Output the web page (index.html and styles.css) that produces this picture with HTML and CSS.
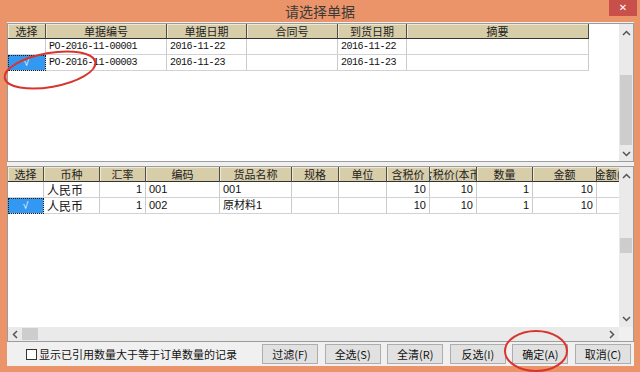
FILE: index.html
```html
<!DOCTYPE html>
<html lang="zh-CN">
<head>
    <meta charset="UTF-8">
    <meta name="viewport" content="width=device-width, initial-scale=1.0">
    <title>请选择单据</title>
    <link rel="stylesheet" href="styles.css">
</head>
<body>

    <div class="window">
        <div class="titlebar">
            <span class="title">请选择单据</span>
            <span class="close">✕</span>
        </div>

        <div class="client">
            <!-- 订单列表 -->
            <div class="grid grid-top">
                <div class="grid-main">
                    <div class="viewport">
                        <div class="row head">
                            <div class="cell">选择</div>
                            <div class="cell">单据编号</div>
                            <div class="cell">单据日期</div>
                            <div class="cell">合同号</div>
                            <div class="cell">到货日期</div>
                            <div class="cell">摘要</div>
                        </div>
                        <div class="row">
                            <div class="cell"></div>
                            <div class="cell code">PO-2016-11-00001</div>
                            <div class="cell code">2016-11-22</div>
                            <div class="cell"></div>
                            <div class="cell code">2016-11-22</div>
                            <div class="cell"></div>
                        </div>
                        <div class="row">
                            <div class="cell pick">√</div>
                            <div class="cell code">PO-2016-11-00003</div>
                            <div class="cell code">2016-11-23</div>
                            <div class="cell"></div>
                            <div class="cell code">2016-11-23</div>
                            <div class="cell"></div>
                        </div>
                    </div>
                    <div class="vscroll">
                        <div class="arrow"><svg width="9" height="6" viewBox="0 0 9 6"><polyline points="1,5 4.5,1.5 8,5" /></svg></div>
                        <div class="track"><div class="thumb thumb-top"></div></div>
                        <div class="arrow"><svg width="9" height="6" viewBox="0 0 9 6"><polyline points="1,1 4.5,4.5 8,1" /></svg></div>
                    </div>
                </div>
            </div>

            <!-- 明细 -->
            <div class="grid grid-bottom">
                <div class="grid-main">
                    <div class="viewport">
                        <div class="row head">
                            <div class="cell">选择</div>
                            <div class="cell">币种</div>
                            <div class="cell">汇率</div>
                            <div class="cell">编码</div>
                            <div class="cell">货品名称</div>
                            <div class="cell">规格</div>
                            <div class="cell">单位</div>
                            <div class="cell">含税价</div>
                            <div class="cell">含税价(本币)</div>
                            <div class="cell">数量</div>
                            <div class="cell">金额</div>
                            <div class="cell">金额(本币)</div>
                        </div>
                        <div class="row">
                            <div class="cell"></div>
                            <div class="cell big">人民币</div>
                            <div class="cell num">1</div>
                            <div class="cell">001</div>
                            <div class="cell">001</div>
                            <div class="cell"></div>
                            <div class="cell"></div>
                            <div class="cell num">10</div>
                            <div class="cell num">10</div>
                            <div class="cell num">1</div>
                            <div class="cell num">10</div>
                            <div class="cell"></div>
                        </div>
                        <div class="row">
                            <div class="cell pick">√</div>
                            <div class="cell big">人民币</div>
                            <div class="cell num">1</div>
                            <div class="cell">002</div>
                            <div class="cell">原材料1</div>
                            <div class="cell"></div>
                            <div class="cell"></div>
                            <div class="cell num">10</div>
                            <div class="cell num">10</div>
                            <div class="cell num">1</div>
                            <div class="cell num">10</div>
                            <div class="cell"></div>
                        </div>
                    </div>
                    <div class="vscroll">
                        <div class="arrow"><svg width="9" height="6" viewBox="0 0 9 6"><polyline points="1,5 4.5,1.5 8,5" /></svg></div>
                        <div class="track"><div class="thumb thumb-bottom"></div></div>
                        <div class="arrow"><svg width="9" height="6" viewBox="0 0 9 6"><polyline points="1,1 4.5,4.5 8,1" /></svg></div>
                    </div>
                </div>
                <div class="hbar">
                    <div class="hscroll">
                        <div class="harrow"><svg width="6" height="9" viewBox="0 0 6 9"><polyline points="5,1 1.5,4.5 5,8" /></svg></div>
                        <div class="hthumb"></div>
                        <div class="htrack"></div>
                        <div class="harrow"><svg width="6" height="9" viewBox="0 0 6 9"><polyline points="1,1 4.5,4.5 1,8" /></svg></div>
                    </div>
                    <div class="corner"></div>
                </div>
            </div>

            <div class="footer">
                <label class="check"><span class="box"></span>显示已引用数量大于等于订单数量的记录</label>
                <div class="buttons">
                    <div class="btn">过滤(F)</div>
                    <div class="btn">全选(S)</div>
                    <div class="btn">全清(R)</div>
                    <div class="btn">反选(I)</div>
                    <div class="btn">确定(A)</div>
                    <div class="btn">取消(C)</div>
                </div>
            </div>
        </div>

        <!-- 红圈标注 -->
        <svg class="marks" width="640" height="372" viewBox="0 0 640 372">
            <ellipse cx="50" cy="70" rx="46" ry="17" transform="rotate(-10 50 70)" />
            <ellipse cx="536" cy="351" rx="31" ry="20" />
        </svg>
    </div>

</body>
</html>
```

FILE: styles.css
```css
* {
    box-sizing: border-box;
}

body {
    margin: 0;
    font-family: "Noto Sans CJK SC", "Liberation Sans", sans-serif;
}

.window {
    width: 640px;
    height: 372px;
    background: #EC9469;
    position: relative;
    display: flex;
    flex-direction: column;
    overflow: hidden;
}

/* title bar */
.titlebar {
    height: 22px;
    display: grid;
    grid-template-columns: 1fr auto 1fr;
    align-items: start;
}
.title {
    grid-column: 2;
    font-size: 14px;
    line-height: 22px;
    color: #3a3a3a;
}
.close {
    grid-column: 3;
    justify-self: end;
    width: 28px;
    height: 16px;
    margin-right: 3px;
    background: #C9504A;
    color: #fff;
    font: bold 10px/16px "DejaVu Sans", sans-serif;
    text-align: center;
}

.client {
    flex: 1;
    margin: 0 6px 6px 7px;
    background: #F0F0F0;
    padding-top: 1px;
    display: flex;
    flex-direction: column;
}

/* grids */
.grid {
    background: #fff;
    border: 1px solid #9C9C9C;
    display: flex;
    flex-direction: column;
}
.grid-top {
    height: 139px;
}
.grid-bottom {
    height: 176px;
    margin-top: 4px;
}
.grid-main {
    flex: 1;
    display: flex;
    min-height: 0;
}
.viewport {
    flex: 1;
    min-width: 0;
    overflow: hidden;
}

.row {
    display: grid;
    height: 16px;
}
.grid-top .row {
    grid-template-columns: 38px 121px 80px 91px 69px 182px;
}
.grid-bottom .row {
    grid-template-columns: 36px 56px 46px 74px 72px 47px 48px 43px 47px 56px 64px 48px;
}

.cell {
    border-right: 1px solid #CBCBCB;
    border-bottom: 1px solid #D2D2D2;
    font-family: "Liberation Sans", "Noto Sans CJK SC", sans-serif;
    font-size: 11px;
    line-height: 15px;
    padding: 0 3px;
    color: #111;
    overflow: hidden;
    white-space: nowrap;
}
.row.head {
    height: 15px;
}
.head .cell {
    background: #D7CDA9;
    border-right: 1px solid #4c4c4c;
    border-bottom: 1px solid #333;
    box-shadow: inset 1px 1px 0 #EFE9D4;
    display: flex;
    justify-content: center;
    align-items: center;
    padding: 0;
    font-family: "Noto Sans CJK SC", sans-serif;
    font-size: 11px;
    color: #222;
}
.code {
    font-family: "Liberation Mono", monospace;
    font-size: 10px;
    letter-spacing: -0.5px;
}
.big {
    font-family: "Noto Sans CJK SC", sans-serif;
    font-size: 12px;
}
.num {
    text-align: right;
}
.pick {
    background: #3398F2;
    outline: 1px dotted #1a1a1a;
    outline-offset: -1px;
    color: #fff;
    text-align: center;
    font-size: 10px;
}

/* scrollbars */
.vscroll {
    width: 14px;
    background: #EAEAEA;
    display: flex;
    flex-direction: column;
}
.arrow {
    height: 17px;
    display: flex;
    align-items: center;
    justify-content: center;
    flex: none;
}
.arrow svg,
.harrow svg {
    display: block;
}
.arrow svg polyline,
.harrow svg polyline {
    fill: none;
    stroke: #555;
    stroke-width: 1.5;
}
.track {
    flex: 1;
}
.thumb {
    background: #CDCDCD;
    margin: 0 1px;
}
.thumb-top {
    margin-top: 34px;
    height: 70px;
}
.thumb-bottom {
    margin-top: 54px;
    height: 15px;
}

.hbar {
    height: 14px;
    display: flex;
}
.hscroll {
    flex: 1;
    background: #EAEAEA;
    display: flex;
}
.harrow {
    width: 14px;
    display: flex;
    align-items: center;
    justify-content: center;
}
.hthumb {
    width: 16px;
    background: #CDCDCD;
    margin: 1px 0;
}
.htrack {
    flex: 1;
}
.corner {
    width: 14px;
    background: #F0F0F0;
}

/* footer */
.footer {
    flex: 1;
    display: flex;
    align-items: center;
    padding: 0 3px 0 19px;
    font-size: 11px;
    color: #111;
}
.check {
    display: flex;
    align-items: center;
    gap: 2px;
}
.box {
    width: 11px;
    height: 11px;
    border: 1px solid #333;
    background: #fff;
}
.buttons {
    margin-left: auto;
    display: flex;
    gap: 6.6px;
}
.btn {
    width: 56px;
    height: 20px;
    background: #E1E1E1;
    border: 1px solid #ADADAD;
    display: flex;
    align-items: center;
    justify-content: center;
    font-size: 11px;
}

/* annotation circles */
.marks {
    position: absolute;
    left: 0;
    top: 0;
    pointer-events: none;
}
.marks ellipse {
    fill: none;
    stroke: #D8352F;
    stroke-width: 2;
}
```
